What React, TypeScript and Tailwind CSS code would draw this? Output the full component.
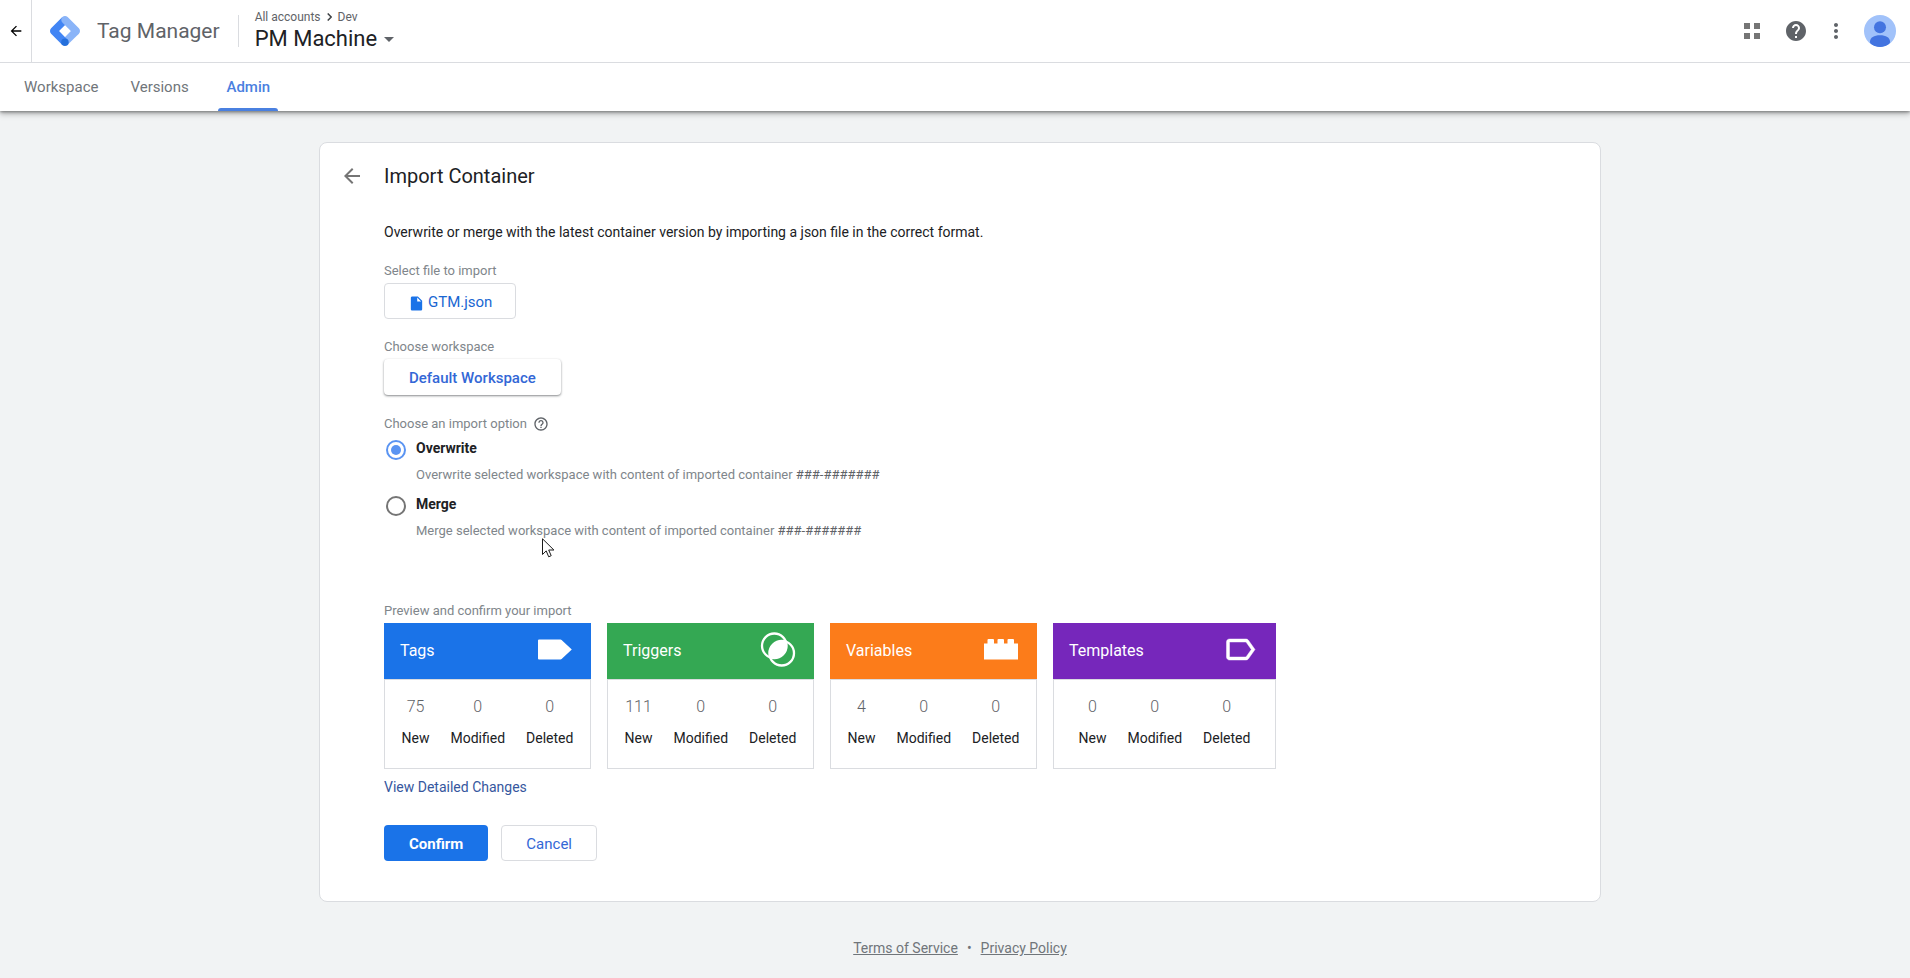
import { useState, type ReactNode } from "react";
import {
  MdArrowBack,
  MdArrowDropDown,
  MdHelp,
  MdHelpOutline,
  MdInsertDriveFile,
  MdMoreVert,
} from "react-icons/md";

function TagManagerLogo() {
  return (
    <svg viewBox="0 0 2470 2470" className="size-[30px]" aria-hidden="true">
      <path fill="#8ab4f8" d="M1449.8 2376 1021 1946.7l921.1-930.5 436.7 436.6z" />
      <path
        fill="#4285f4"
        d="M1452.9 527.1 1016.3 90.4 90.5 1016.2c-120.6 120.5-120.7 315.8-.2 436.4l.2.2 925.8 925.8 428.3-430.3L745 1235.1z"
      />
      <path
        fill="#8ab4f8"
        d="M2378.7 1016.2 1452.9 90.4c-120.6-120.6-316.1-120.6-436.7 0s-120.6 316.1 0 436.6l926.3 925.8c120.6 120.6 316.1 120.6 436.6 0s120.6-316.1 0-436.6z"
      />
      <circle fill="#246fdb" cx="1231.2" cy="2163.9" r="306" />
    </svg>
  );
}

function AppsIcon() {
  return (
    <svg viewBox="0 0 16 16" className="size-4" fill="#757575" aria-hidden="true">
      <path d="M0 0h6v6H0zM10 0h6v6h-6zM0 10h6v6H0zM10 10h6v6h-6z" />
    </svg>
  );
}

function Avatar() {
  return (
    <svg viewBox="0 0 32 32" className="size-8" aria-hidden="true">
      <clipPath id="avatar-clip">
        <circle cx="16" cy="16" r="16" />
      </clipPath>
      <g clipPath="url(#avatar-clip)">
        <rect width="32" height="32" fill="#a1c2fa" />
        <circle cx="16" cy="12.3" r="6" fill="#4374e0" />
        <path fill="#4374e0" d="M6 26.500c0-4 4-6.300 10-6.300s10 2.300 10 6.300v.5c0 2.500-4 5-10 5s-10-2.500-10-5z" />
      </g>
    </svg>
  );
}

function TagIcon() {
  return (
    <svg viewBox="0 0 40 40" className="size-10" fill="#fff" aria-hidden="true">
      <path d="M4 8.500h21.500a1.500 1.500 0 0 1 1.100.5L36.800 18.500l-10.200 9.500a1.500 1.500 0 0 1-1.100.5H4a1 1 0 0 1-1-1V9.500a1 1 0 0 1 1-1z" />
    </svg>
  );
}

function TriggerIcon() {
  return (
    <svg viewBox="0 0 40 40" className="size-10" aria-hidden="true">
      <clipPath id="trigger-clip">
        <circle cx="16.300" cy="14.800" r="12.300" />
      </clipPath>
      <circle cx="23.700" cy="22.200" r="12.300" fill="#fff" clipPath="url(#trigger-clip)" />
      <circle cx="16.300" cy="14.800" r="12.300" fill="none" stroke="#fff" strokeWidth="2.300" />
      <circle cx="23.700" cy="22.200" r="12.300" fill="none" stroke="#fff" strokeWidth="2.300" />
    </svg>
  );
}

function VariableIcon() {
  return (
    <svg viewBox="0 0 40 40" className="size-10" fill="#fff" aria-hidden="true">
      <path d="M3 12.500h3.500V9a1 1 0 0 1 1-1h4.500a1 1 0 0 1 1 1v3.500h3.500V9a1 1 0 0 1 1-1H22a1 1 0 0 1 1 1v3.500h3.500V9a1 1 0 0 1 1-1H32a1 1 0 0 1 1 1v3.500h4v16H3z" />
    </svg>
  );
}

function TemplateIcon() {
  return (
    <svg viewBox="0 0 40 40" className="size-10" fill="#fff" stroke="#fff" strokeWidth="0.300" aria-hidden="true">
      <path
        transform="translate(2 .5) scale(1.5)"
        d="M17.630 5.840C17.270 5.330 16.670 5 16 5L5 5.010C3.900 5.010 3 5.900 3 7v10c0 1.100.900 1.990 2 1.990L16 19c.670 0 1.270-.330 1.630-.840L22 12l-4.370-6.160zM16 17H5V7h11l3.550 5L16 17z"
      />
    </svg>
  );
}

function Cursor() {
  return (
    <svg
      viewBox="0 0 13 20"
      className="pointer-events-none absolute top-[329px] left-[222px] h-5 w-[13px]"
      aria-hidden="true"
    >
      <path
        d="M.5.8v15.700l3.700-3.600 2.500 5.900 2.500-1.100-2.500-5.700h5.200z"
        fill="#fff"
        stroke="#1b1b1b"
        strokeWidth="1"
      />
    </svg>
  );
}

const tabs = [
  { name: "Workspace", active: false },
  { name: "Versions", active: false },
  { name: "Admin", active: true },
];

const options = [
  { id: "overwrite", title: "Overwrite" },
  { id: "merge", title: "Merge" },
];

type Summary = {
  title: string;
  header: string;
  width: string;
  icon: ReactNode;
  counts: [number, number, number];
};

const summaries: Summary[] = [
  { title: "Tags", header: "bg-[#1a73e8]", width: "w-[207px]", icon: <TagIcon />, counts: [75, 0, 0] },
  { title: "Triggers", header: "bg-[#34a853]", width: "w-[207px]", icon: <TriggerIcon />, counts: [111, 0, 0] },
  { title: "Variables", header: "bg-[#fc7c1a]", width: "w-[207px]", icon: <VariableIcon />, counts: [4, 0, 0] },
  { title: "Templates", header: "bg-[#7627bb]", width: "w-[223px]", icon: <TemplateIcon />, counts: [0, 0, 0] },
];

const countLabels = ["New", "Modified", "Deleted"];

function Label({ children }: { children: ReactNode }) {
  return <div className="text-[13px] leading-4 text-[#80868b]">{children}</div>;
}

function SummaryCard({ title, header, width, icon, counts }: Summary) {
  return (
    <section className={`${width} shrink-0`}>
      <header className={`flex h-14 items-center justify-between px-4 text-white ${header}`}>
        <h2 className="text-[16px] leading-5">{title}</h2>
        {icon}
      </header>
      <dl className="flex justify-center gap-[21px] border border-[#dadce0] pt-[17px] pb-5">
        {countLabels.map((label, i) => (
          <div key={label} className="flex flex-col-reverse gap-[11px] text-center">
            <dt className="text-[14px] leading-5 text-[#202124]">{label}</dt>
            <dd className="text-[16px] leading-5 font-light text-[#5f6368]">{counts[i]}</dd>
          </div>
        ))}
      </dl>
    </section>
  );
}

export default function App() {
  const [option, setOption] = useState("overwrite");

  return (
    <div className="min-h-screen bg-[#f1f3f4] font-['Roboto','Liberation_Sans',sans-serif] text-[#202124]">
      <div className="relative bg-white shadow-[0_1px_3px_rgba(0,0,0,0.4),0_3px_6px_rgba(0,0,0,0.25)]">
        <header className="flex h-[63px] items-center border-b border-[#dadce0] pr-[14px]">
          <button aria-label="Back" className="flex h-full w-8 items-center justify-center border-r border-[#dadce0] text-black">
            <MdArrowBack className="size-4" />
          </button>
          <a href="#home" className="ml-[18px] flex items-center gap-[17px]">
            <TagManagerLogo />
            <span className="text-[21px] leading-8 text-[#5f6368]">Tag Manager</span>
          </a>
          <div className="ml-[18px] h-8 w-px bg-[#dadce0]" />
          <div className="ml-4">
            <nav className="flex items-center gap-[6px] text-[12px] leading-4 text-[#5f6368]">
              <a href="#accounts">All accounts</a>
              <svg viewBox="0 0 5 8" className="h-2 w-[5px]" fill="none" stroke="#3c4043" strokeWidth="1.5" aria-hidden="true">
                <path d="M.7.5 4.200 4 .7 7.500" />
              </svg>
              <a href="#dev">Dev</a>
            </nav>
            <button className="flex items-center text-[22px] leading-7">
              PM Machine
              <MdArrowDropDown className="size-6 text-[#5f6368]" />
            </button>
          </div>
          <div className="ml-auto flex items-center">
            <button aria-label="Apps" className="mr-6">
              <AppsIcon />
            </button>
            <button aria-label="Help" className="mr-4 text-[#5f6368]">
              <MdHelp className="size-6" />
            </button>
            <button aria-label="More" className="mr-4 text-[#5f6368]">
              <MdMoreVert className="size-6" />
            </button>
            <button aria-label="Account">
              <Avatar />
            </button>
          </div>
        </header>
        <nav className="flex h-12 gap-4 pl-4 text-[15px] leading-5">
          {tabs.map((tab) => (
            <a
              key={tab.name}
              href={`#${tab.name.toLowerCase()}`}
              className={
                tab.active
                  ? "relative flex items-center px-2 font-medium text-[#4a80e0]"
                  : "flex min-w-20 items-center px-2 text-[#70757a]"
              }
            >
              {tab.name}
              {tab.active && <span className="absolute inset-x-0 bottom-0 h-[3px] rounded-t-[3px] bg-[#4a80e0]" />}
            </a>
          ))}
        </nav>
      </div>

      <div className="pt-[31px] pr-5 pl-[30px]">
        <main className="mx-auto max-w-[1282px] rounded-lg border border-[#dadce0] bg-white pb-10">
          <div className="grid h-[66px] grid-cols-[64px_1fr] items-center">
            <button aria-label="Go back" className="flex justify-center text-[#757575]">
              <MdArrowBack className="size-6" />
            </button>
            <h1 className="text-[20px] leading-7">Import Container</h1>
          </div>

          <div className="relative pt-[13px] pr-4 pl-16">
            <p className="text-[14px] leading-5">
              Overwrite or merge with the latest container version by importing a json file in the correct format.
            </p>

            <div className="mt-[21px] flex flex-col items-start gap-1">
              <Label>Select file to import</Label>
              <button className="flex h-9 items-center gap-[3px] rounded border border-[#dadce0] px-[23px] pt-[2px] text-[15px] leading-5 text-[#1967d2]">
                <MdInsertDriveFile className="mt-[2px] size-[17px] text-[#1a73e8]" />
                GTM.json
              </button>
            </div>

            <div className="mt-5 flex flex-col items-start gap-1">
              <Label>Choose workspace</Label>
              <button className="h-9 rounded px-[25px] pt-[2px] text-[15px] leading-5 font-medium text-[#3367d6] shadow-[0_1px_2px_rgba(60,64,67,0.5),0_1px_3px_rgba(60,64,67,0.15)]">
                Default Workspace
              </button>
            </div>

            <div className="mt-5 flex h-[18px] items-center gap-[6px]">
              <Label>Choose an import option</Label>
              <MdHelpOutline className="size-4 text-[#5f6368]" />
            </div>

            <div className="mt-[5px] flex flex-col gap-[11px]">
              {options.map(({ id, title }) => (
                <div key={id} className="flex gap-[10px] pl-[2px]">
                  <input
                    type="radio"
                    id={id}
                    name="import-option"
                    checked={option === id}
                    onChange={() => setOption(id)}
                    className="mt-[2px] size-5 shrink-0 appearance-none rounded-full border-2 border-[#757575] bg-clip-content p-[3px] checked:border-[#5a94f2] checked:bg-[#5a94f2]"
                  />
                  <label htmlFor={id}>
                    <span className="block text-[14px] leading-5 font-bold">{title}</span>
                    <span className="mt-[9px] block text-[13px] leading-4 text-[#80868b]">
                      {title} selected workspace with content of imported container{" "}
                      <span className="text-[#5f6368]">###-#######</span>
                    </span>
                  </label>
                </div>
              ))}
            </div>

            <div className="mt-16 flex flex-col gap-1">
              <Label>Preview and confirm your import</Label>
              <div className="flex flex-wrap gap-4">
                {summaries.map((summary) => (
                  <SummaryCard key={summary.title} {...summary} />
                ))}
              </div>
            </div>

            <a href="#changes" className="mt-2 block w-fit text-[14px] leading-5 text-[#36579e]">
              View Detailed Changes
            </a>

            <div className="mt-7 flex gap-[13px] text-[15px] leading-5">
              <button className="h-9 rounded bg-[#1a73e8] px-[25px] pt-[2px] font-bold text-white">Confirm</button>
              <button className="h-9 rounded border border-[#dadce0] px-6 pt-[2px] text-[#3367d6]">Cancel</button>
            </div>

            <Cursor />
          </div>
        </main>

        <footer className="mt-9 flex justify-center gap-[9px] text-[14px] leading-5 text-[#70757a]">
          <a href="#terms" className="underline">Terms of Service</a>
          <span>•</span>
          <a href="#privacy" className="underline">Privacy Policy</a>
        </footer>
      </div>
    </div>
  );
}
